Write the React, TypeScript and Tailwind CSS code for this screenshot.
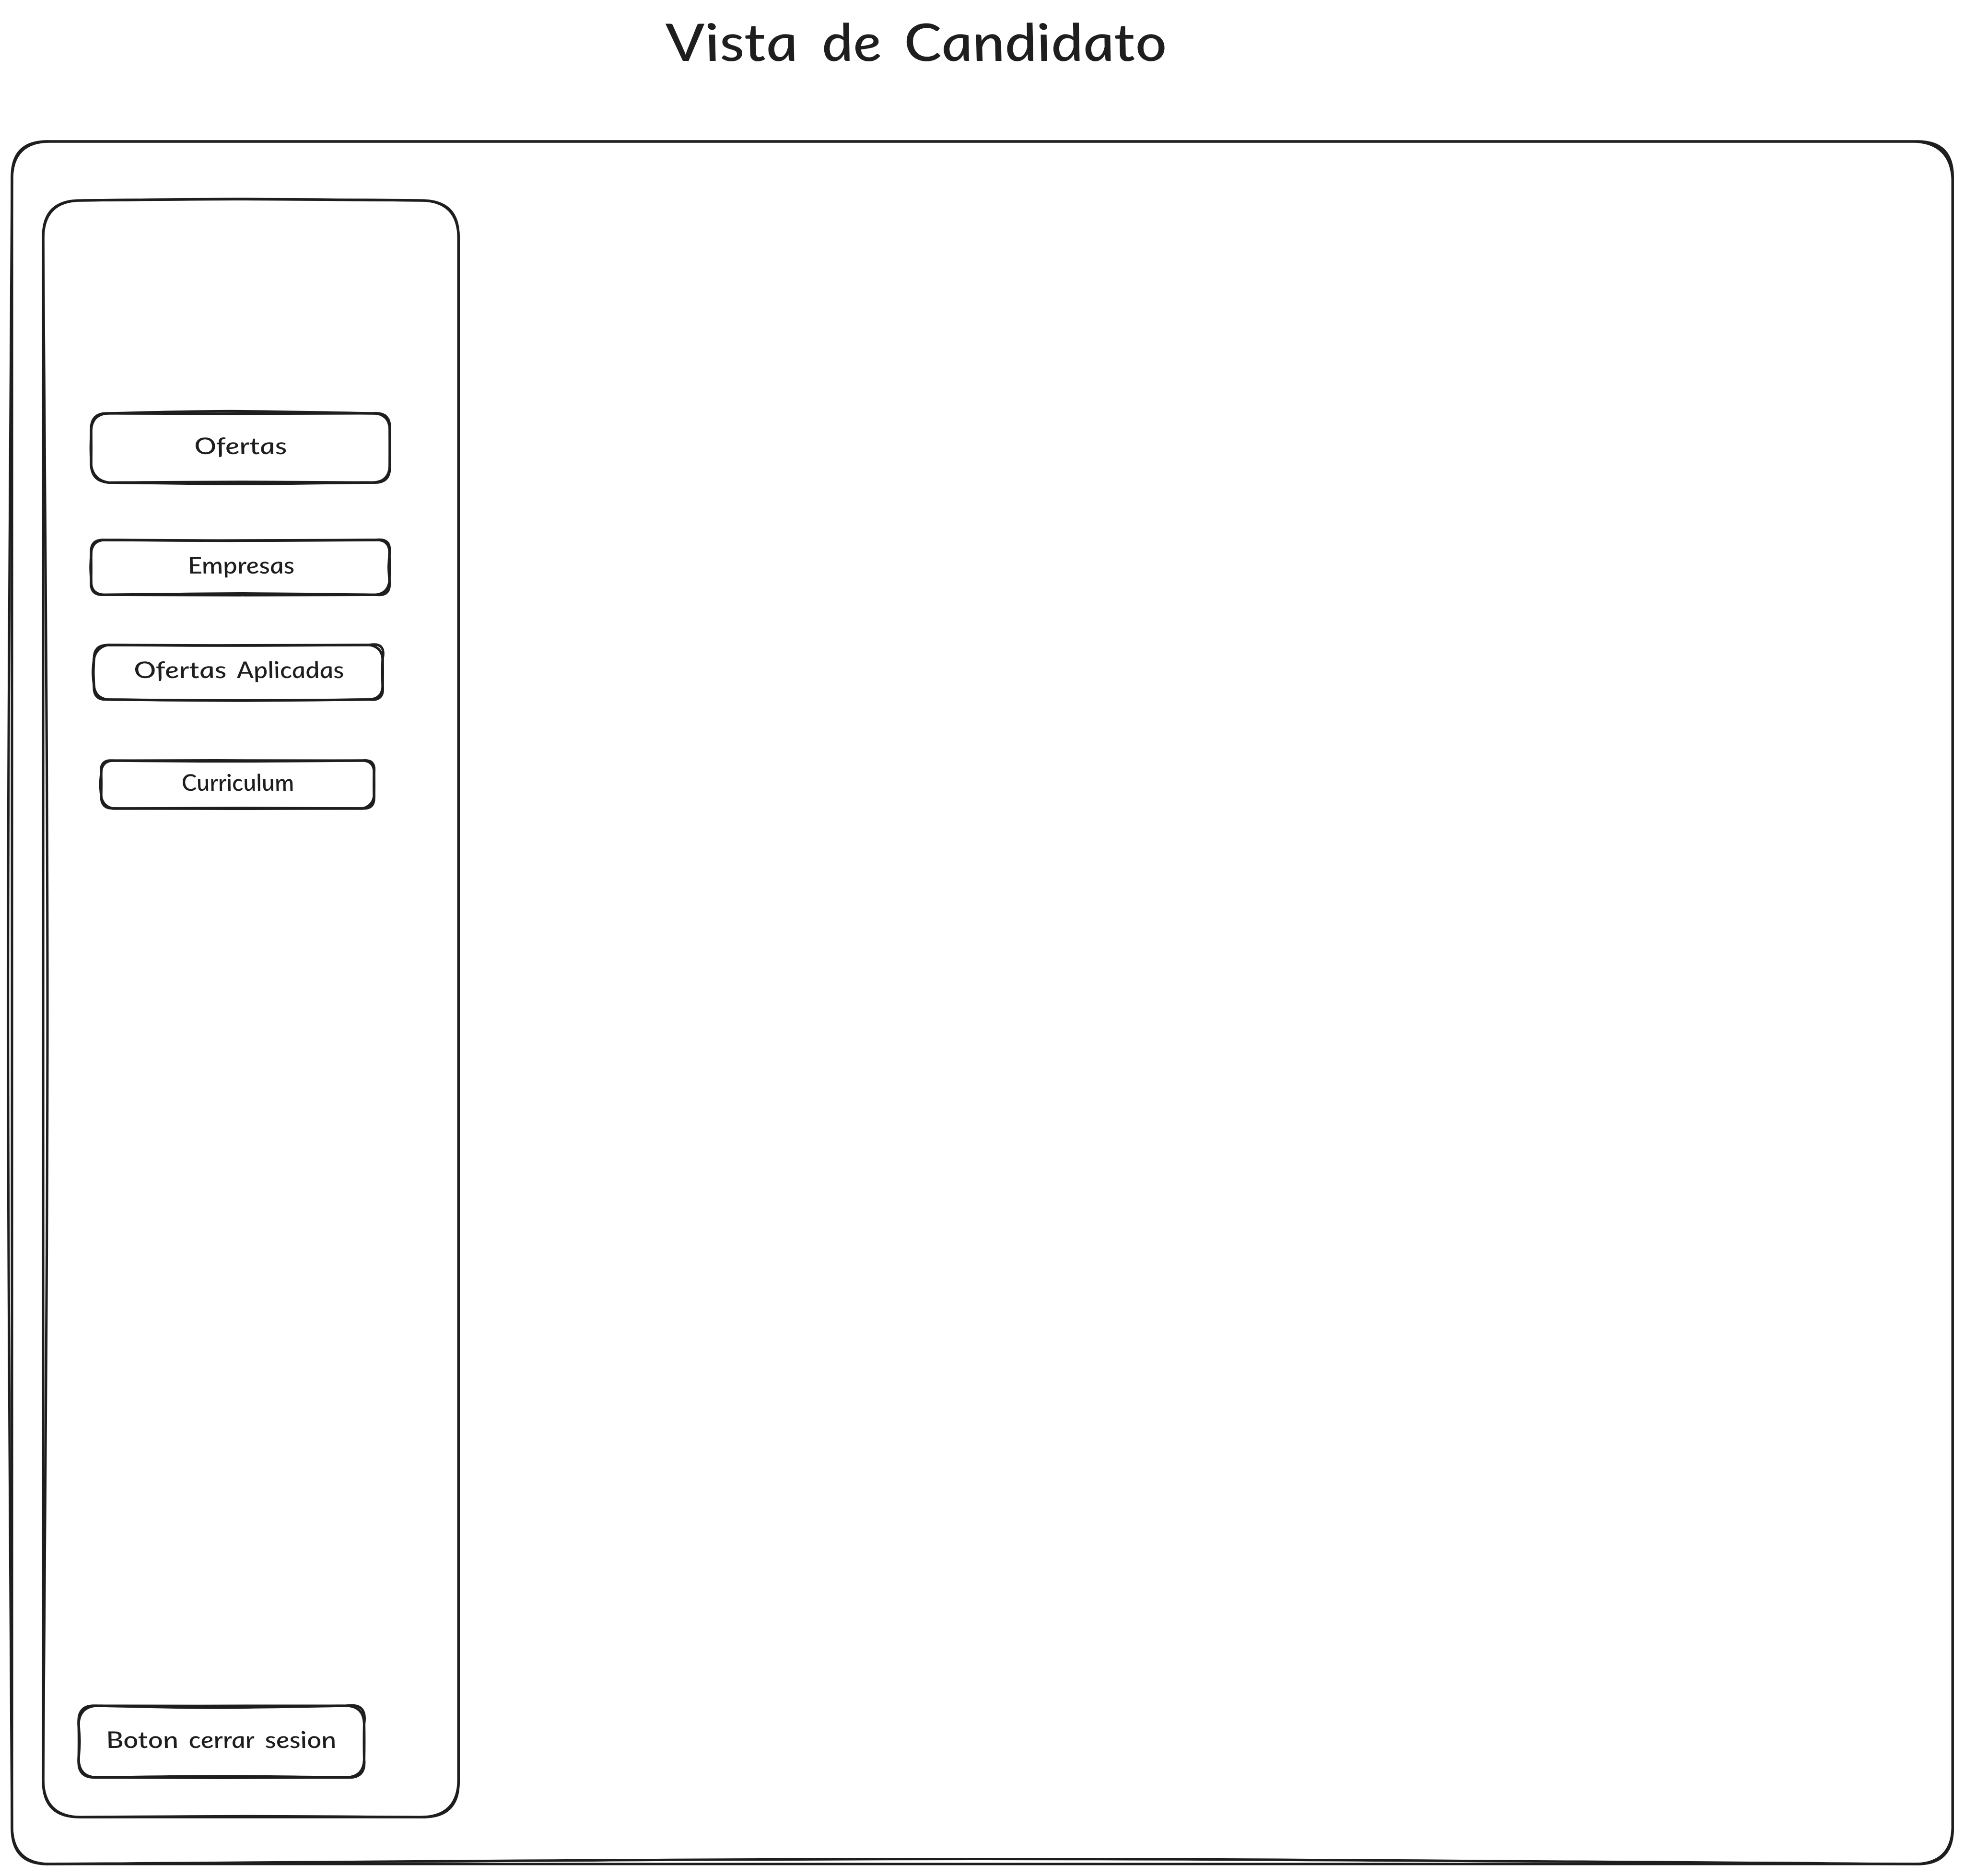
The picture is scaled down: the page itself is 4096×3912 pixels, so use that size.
import { useLayoutEffect, useRef, useState } from "react";

type Four = [number, number, number, number];

// One pen pass around a rounded box: bow of each side (top, right, bottom, left)
// and outward push of each corner (tl, tr, br, bl).
type Pass = { bow: Four; push: Four };

function outline(w: number, h: number, r: number, { bow, push }: Pass) {
  const [t, ri, b, l] = bow.map((v) => (v * 4) / 3);
  const [tl, tr, br, bl] = push;
  return [
    `M${r} 0`,
    `C${w * 0.45} ${t} ${w * 0.45} ${t} ${w - r} 0`,
    `Q${w + tr} ${-tr} ${w} ${r}`,
    `C${w + ri} ${h * 0.5} ${w + ri} ${h * 0.5} ${w} ${h - r}`,
    `Q${w + br} ${h + br} ${w - r} ${h}`,
    `C${w * 0.5} ${h + b} ${w * 0.5} ${h + b} ${r} ${h}`,
    `Q${-bl} ${h + bl} 0 ${h - r}`,
    `C${l} ${h * 0.5} ${l} ${h * 0.5} 0 ${r}`,
    `Q${-tl} ${-tl} ${r} 0`,
  ].join(" ");
}

function Sketch({ w, h, r, passes }: { w: number; h: number; r: number; passes: Pass[] }) {
  return (
    <svg
      className="pointer-events-none absolute inset-0 overflow-visible"
      width={w}
      height={h}
      fill="none"
      stroke="#1e1e1e"
      strokeWidth={5.1}
      strokeLinecap="round"
      strokeLinejoin="round"
    >
      {passes.map((p, i) => (
        <path key={i} d={outline(w, h, r, p)} />
      ))}
    </svg>
  );
}

// A word stretched to the given width.
function Word({ text, width }: { text: string; width: number }) {
  const ref = useRef<HTMLSpanElement>(null);
  const [scale, setScale] = useState(1);
  useLayoutEffect(() => {
    if (ref.current) setScale(width / ref.current.offsetWidth);
  }, [width]);
  return (
    <span className="block text-left" style={{ width }}>
      <span
        ref={ref}
        className="inline-block origin-bottom-left whitespace-nowrap"
        style={{ transform: `scaleX(${scale}) skewX(8deg)` }}
      >
        {text}
      </span>
    </span>
  );
}

const label = "ml-[3px] flex font-['Lato'] text-[48px] leading-none font-medium italic";

export default function App() {
  return (
    <div className="flex h-[3912px] w-[4096px] flex-col overflow-hidden bg-white font-['Lato',sans-serif] text-[#1e1e1e]">
      <header className="h-[295px] shrink-0">
        <h1 className="flex pt-[31px] pl-[1396px] text-[108px] leading-none font-medium italic">
          <Word text="Vista" width={275} />
          <span className="w-[50px]"> </span>
          <Word text="de" width={124} />
          <span className="w-[48px]"> </span>
          <Word text="Candidato" width={548} />
        </h1>
      </header>
      <main className="relative ml-[24.7px] h-[3592px] w-[4047.3px] shrink-0 pt-[123.3px] pl-[65.8px]">
        <Sketch
          w={4047.3}
          h={3592}
          r={79.7}
          passes={[
            { bow: [0, 0, 0, 0], push: [0, 3.5, 3.5, 0] },
            { bow: [0, 0, -10.5, -8.3], push: [3.5, -3.5, 0, 3] },
          ]}
        />
        <aside className="relative flex h-[3371.2px] w-[866.3px] flex-col pt-[443.5px]">
          <Sketch
            w={866.3}
            h={3371.2}
            r={79.7}
            passes={[
              { bow: [-3, 0, 0, 0], push: [0, 0, 0, 0] },
              { bow: [-2.6, 0, -1.8, 9], push: [2, 2, 3.5, 2.5] },
            ]}
          />
          <nav className="flex flex-col">
            <button className="relative ml-[99.4px] flex h-[144.2px] w-[622.9px] items-start pt-[43px] pl-[215.7px]">
              <Sketch
                w={622.9}
                h={144.2}
                r={36}
                passes={[
                  { bow: [-4.6, 0, 2.8, -0.8], push: [-1.5, 0, -1, -2] },
                  { bow: [0.8, 0.4, -1.5, 0.6], push: [2, 4, 3, -5] },
                ]}
              />
              <span className={label}>
                <Word text="Ofertas" width={193.5} />
              </span>
            </button>
            <button className="relative mt-[119.7px] ml-[99.8px] flex h-[114.3px] w-[622.2px] items-start pt-[28px] pl-[201.9px]">
              <Sketch
                w={622.2}
                h={114.3}
                r={28.6}
                passes={[
                  { bow: [1.1, -1.6, -2.8, -1.2], push: [-1, 1, -3, 0] },
                  { bow: [1.6, 0.6, 0.8, 0.4], push: [2.5, 5, 4, 3] },
                ]}
              />
              <span className={label}>
                <Word text="Empresas" width={222} />
              </span>
            </button>
            <button className="relative mt-[104.9px] ml-[105.9px] flex h-[113.7px] w-[602.1px] items-start pt-[27.5px] pl-[83.7px]">
              <Sketch
                w={602.1}
                h={113.7}
                r={28.4}
                passes={[
                  { bow: [0.8, -1, 1.8, -2.4], push: [-5, -3, -1, -3] },
                  { bow: [1.3, 0.5, 2.4, -1], push: [0, 7, 4, 2] },
                ]}
              />
              <span className={label}>
                <Word text="Ofertas" width={193.5} />
                <span className="w-[20px]"> </span>
                <Word text="Aplicadas" width={224} />
              </span>
            </button>
            <button className="relative mt-[127.8px] ml-[120.6px] flex h-[99.9px] w-[569.1px] items-start pt-[21px] pl-[168px]">
              <Sketch
                w={569.1}
                h={99.9}
                r={25}
                passes={[
                  { bow: [1.8, -0.6, -0.8, -1.8], push: [-1, 0, -4, -4] },
                  { bow: [-0.4, 0.5, 0.6, 0.6], push: [3, 4, 2, 0] },
                ]}
              />
              <span className={label}>
                <Word text="Curriculum" width={234} />
              </span>
            </button>
          </nav>
          <button className="relative mt-[1870.8px] ml-[73.6px] flex h-[149.4px] w-[595.5px] items-start pt-[45.5px] pl-[58.3px]">
            <Sketch
              w={595.5}
              h={149.4}
              r={37.4}
              passes={[
                { bow: [0.2, -0.6, -2.6, 2], push: [-2, -1, -1, -1] },
                { bow: [4.2, 0.5, 1, 0.6], push: [3, 7, 4, 3] },
              ]}
            />
            <span className={label}>
              <Word text="Boton" width={150} />
              <span className="w-[22px]"> </span>
              <Word text="cerrar" width={138} />
              <span className="w-[21px]"> </span>
              <Word text="sesion" width={148} />
            </span>
          </button>
        </aside>
      </main>
    </div>
  );
}
